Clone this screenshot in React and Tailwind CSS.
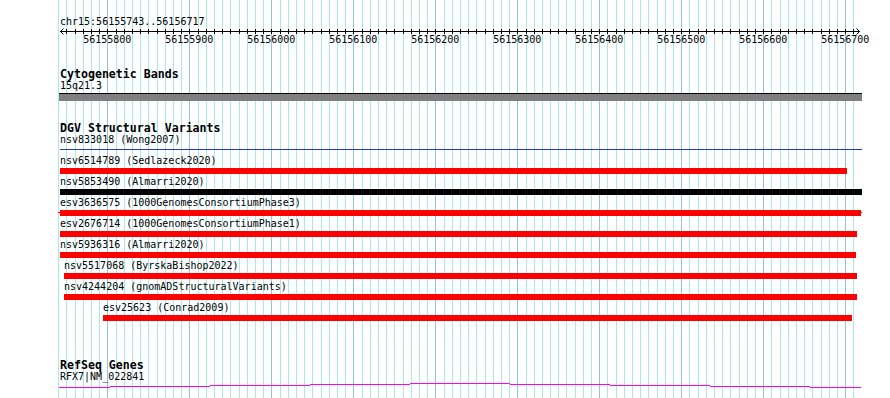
import React from "react";

// 56155743..56156717, 0.82 px per bp, 56155800 sits at x=107.3
const X0 = 107.3;
const STEP = 8.2;

const features = [
  { label: "nsv833018 (Wong2007)", from: 60, to: 862, kind: "thin" },
  { label: "nsv6514789 (Sedlazeck2020)", from: 60, to: 847, color: "bg-[#ff0000]" },
  { label: "nsv5853490 (Almarri2020)", from: 60, to: 862, color: "bg-black" },
  { label: "esv3636575 (1000GenomesConsortiumPhase3)", from: 60, to: 861, color: "bg-[#ff0000]", whisker: true },
  { label: "esv2676714 (1000GenomesConsortiumPhase1)", from: 60, to: 857, color: "bg-[#ff0000]" },
  { label: "nsv5936316 (Almarri2020)", from: 60, to: 856, color: "bg-[#ff0000]" },
  { label: "nsv5517068 (ByrskaBishop2022)", from: 64, to: 857, color: "bg-[#ff0000]" },
  { label: "nsv4244204 (gnomADStructuralVariants)", from: 64, to: 857, color: "bg-[#ff0000]" },
  { label: "esv25623 (Conrad2009)", from: 103, to: 852, color: "bg-[#ff0000]" },
];

const geneSegments = [
  [59, 110, 4], [110, 210, 3], [210, 310, 2], [310, 410, 1], [410, 510, 0],
  [510, 610, 1], [610, 710, 2], [710, 810, 3], [810, 861, 4],
];

function Grid() {
  const lines = [];
  for (let j = -6; j <= 91; j++) {
    const x = Math.round(X0 + STEP * j);
    lines.push(
      <rect key={j} x={x} y={0} width={1} height={398} fill={j % 10 === 0 ? "#8ec4e4" : "#a8eaec"} />
    );
  }
  return (
    <svg className="absolute left-0 top-0" width="890" height="398">
      {lines}
    </svg>
  );
}

function Ruler() {
  const ticks = [];
  for (let j = -5; j <= 91; j++) {
    ticks.push(<rect key={j} x={Math.round(X0 + STEP * j)} y={1} width={1} height={5} fill="#000" />);
  }
  const labels = [];
  for (let k = 0; k <= 9; k++) {
    labels.push(
      <text key={k} x={X0 + 82 * k} y={15} textAnchor="middle" fontSize="10" fontFamily="'DejaVu Sans Mono', monospace" fill="#000">
        {56155800 + k * 100}
      </text>
    );
  }
  return (
    <svg className="-ml-[60px] block" width="890" height="20">
      <rect x={60} y={3} width={800} height={1} fill="#000" />
      <polyline points="63.5,0.5 60.5,3.5 63.5,6.5" fill="none" stroke="#000" strokeWidth="1" />
      <polyline points="856.5,0.5 859.5,3.5 856.5,6.5" fill="none" stroke="#000" strokeWidth="1" />
      {ticks}
      {labels}
    </svg>
  );
}

function Feature({ f }) {
  return (
    <div className="h-[21px]">
      <div className="h-[11px] leading-[8px] whitespace-nowrap" style={{ marginLeft: f.from - 60 }}>
        {f.label}
      </div>
      {f.kind === "thin" ? (
        <div className="h-[6px]">
          <div className="mt-[2px] h-px bg-[#2b35c8]" style={{ marginLeft: f.from - 60, width: f.to - f.from }} />
        </div>
      ) : (
        <div className="relative h-[6px]">
          {f.whisker && <div className="absolute top-[2px] -left-[2px] h-px w-[804px] bg-[#ff0000]" />}
          <div className={`relative h-[6px] ${f.color}`} style={{ marginLeft: f.from - 60, width: f.to - f.from }} />
        </div>
      )}
    </div>
  );
}

export default function App() {
  return (
    <div className="relative w-[890px] h-[398px] overflow-hidden bg-white text-black font-['DejaVu_Sans_Mono',monospace] text-[10px]">
      <Grid />
      <div className="relative pl-[60px] pt-[17px]">
        <div className="h-[11px] leading-[9px]">chr15:56155743..56156717</div>
        <Ruler />

        {/* Cytogenetic Bands */}
        <div className="mt-[20.5px] h-[10px] leading-[10px] text-[11.6px] font-bold">Cytogenetic Bands</div>
        <div className="mt-[2px] h-[10px] leading-[10px]">15q21.3</div>
        <div className="mt-[2.5px] -ml-px w-[803px]">
          <div className="h-px bg-black" />
          <div className="h-[7px] bg-[#808080]" />
        </div>

        {/* DGV Structural Variants */}
        <div className="mt-[22px] h-[10px] leading-[10px] text-[11.6px] font-bold">DGV Structural Variants</div>
        <div className="mt-[3px]">
          {features.map((f) => (
            <Feature key={f.label} f={f} />
          ))}
        </div>

        {/* RefSeq Genes */}
        <div className="mt-[35px] h-[10px] leading-[10px] text-[11.6px] font-bold">RefSeq Genes</div>
        <div className="mt-[2px] h-[11px] leading-[10px]">RFX7|NM_022841</div>
        <svg className="-ml-px block" width="803" height="6">
          {geneSegments.map(([a, b, y]) => (
            <rect key={a} x={a - 59} y={y} width={b - a} height={1} fill="#ff00ff" />
          ))}
        </svg>
      </div>
    </div>
  );
}
